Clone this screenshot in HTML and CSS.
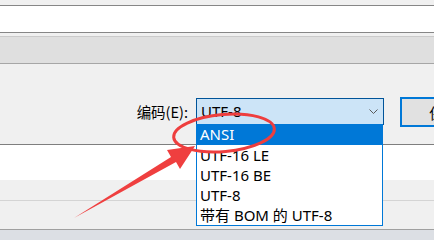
FILE: index.html
```html
<!DOCTYPE html>
<html lang="zh-CN">
<head>
<meta charset="utf-8">
<title>另存为 - 编码</title>
<link rel="stylesheet" href="styles.css">
</head>
<body>
<div class="dialog">
  <div class="name-strip"><div class="name-field"></div></div>
  <div class="type-band"></div>
  <div class="actions">
    <div class="enc-row">
      <label class="enc-label">编码(E):</label>
      <div class="combo">
        <span class="combo-value">UTF-8</span>
        <svg class="chevron" width="9" height="5" viewBox="0 0 9 5"><path d="M0.5 0.5 L4.5 4.5 L8.5 0.5" fill="none" stroke="#5a5a5a" stroke-width="1"/></svg>
        <ul class="combo-list">
          <li class="item selected">ANSI</li>
          <li class="item">UTF-16 LE</li>
          <li class="item">UTF-16 BE</li>
          <li class="item">UTF-8</li>
          <li class="item">带有 BOM 的 UTF-8</li>
        </ul>
      </div>
      <button class="save-btn">保存(S)</button>
    </div>
  </div>
  <div class="white-area"></div>
  <div class="gray-strip"></div>
  <div class="gray-strip2"></div>
  <div class="footer"></div>
</div>
<svg class="annot" width="434" height="240" viewBox="0 0 434 240">
  <ellipse cx="224" cy="133" rx="50.5" ry="18.5" transform="rotate(-5 224 133)" fill="none" stroke="#ee3e3e" stroke-width="3"/>
  <path d="M74 218 L171 157 L167 150 L195 146 L180 169 L176 162 Z" fill="#ef3f3f"/>
</svg>
</body>
</html>
```

FILE: styles.css
```css
html, body {
  margin: 0;
  padding: 0;
  overflow: hidden;
}
body {
  width: 434px;
  height: 240px;
  background: #f0f0f0;
  font-family: "Noto Sans", "Noto Sans CJK SC", sans-serif;
  font-size: 15px;
  color: #000;
  position: relative;
}
.dialog {
  width: 434px;
}
.name-strip {
  padding-top: 5px;
  padding-bottom: 3px;
}
.name-field {
  height: 26px;
  background: #fff;
  border-top: 1px solid #868686;
  border-bottom: 1px solid #868686;
}
.type-band {
  height: 26px;
  background: #dfdfdf;
  border-top: 1px solid #cacaca;
  border-bottom: 1px solid #a6a6a6;
}
.actions {
  height: 80px;
  box-sizing: border-box;
  padding-top: 33px;
}
.enc-row {
  display: flex;
  align-items: flex-start;
}
.enc-label {
  flex: 0 0 188px;
  text-align: right;
  line-height: 30px;
  height: 30px;
  font-family: "Noto Sans CJK SC", "Noto Sans", sans-serif;
  font-size: 14.5px;
}
.combo {
  position: relative;
  flex: 0 0 188px;
  box-sizing: border-box;
  height: 27px;
  margin-top: 1px;
  margin-left: 8px;
  background: #cce4f7;
  border: 1px solid #005499;
  display: flex;
  align-items: center;
  padding: 0 5px 0 4px;
}
.combo-value {
  flex: 1;
  line-height: 25px;
}
.chevron {
  display: block;
}
.combo-list {
  position: absolute;
  top: 100%;
  left: -1px;
  width: 187px;
  box-sizing: border-box;
  margin: 0;
  padding: 0;
  list-style: none;
  background: #fff;
  border: 1px solid #0078d7;
  z-index: 2;
}
.item {
  height: 20px;
  line-height: 20px;
  padding-left: 3px;
  white-space: nowrap;
}
.item.selected {
  background: #0078d7;
  color: #fff;
  margin: -1px -1px 0 -1px;
  padding-left: 4px;
  height: 21px;
  line-height: 21px;
}
.save-btn {
  flex: 0 0 106px;
  height: 30px;
  margin-left: 16px;
  box-sizing: border-box;
  border: 2px solid #0078d7;
  background: #e1e1e1;
  font: inherit;
  font-family: "Noto Sans CJK SC", "Noto Sans", sans-serif;
  font-size: 14.5px;
  padding: 0;
  color: #000;
}
.white-area {
  height: 35px;
  background: #fff;
  border-top: 1px solid #7e7e7e;
}
.gray-strip {
  height: 20px;
  border-bottom: 1px solid #d4d4d4;
}
.gray-strip2 {
  height: 28px;
  border-bottom: 1px solid #a0a0a0;
}
.footer {
  height: 12px;
  background: #dcdfe4;
}
.annot {
  position: absolute;
  top: 0;
  left: 0;
  pointer-events: none;
  z-index: 5;
}
```
